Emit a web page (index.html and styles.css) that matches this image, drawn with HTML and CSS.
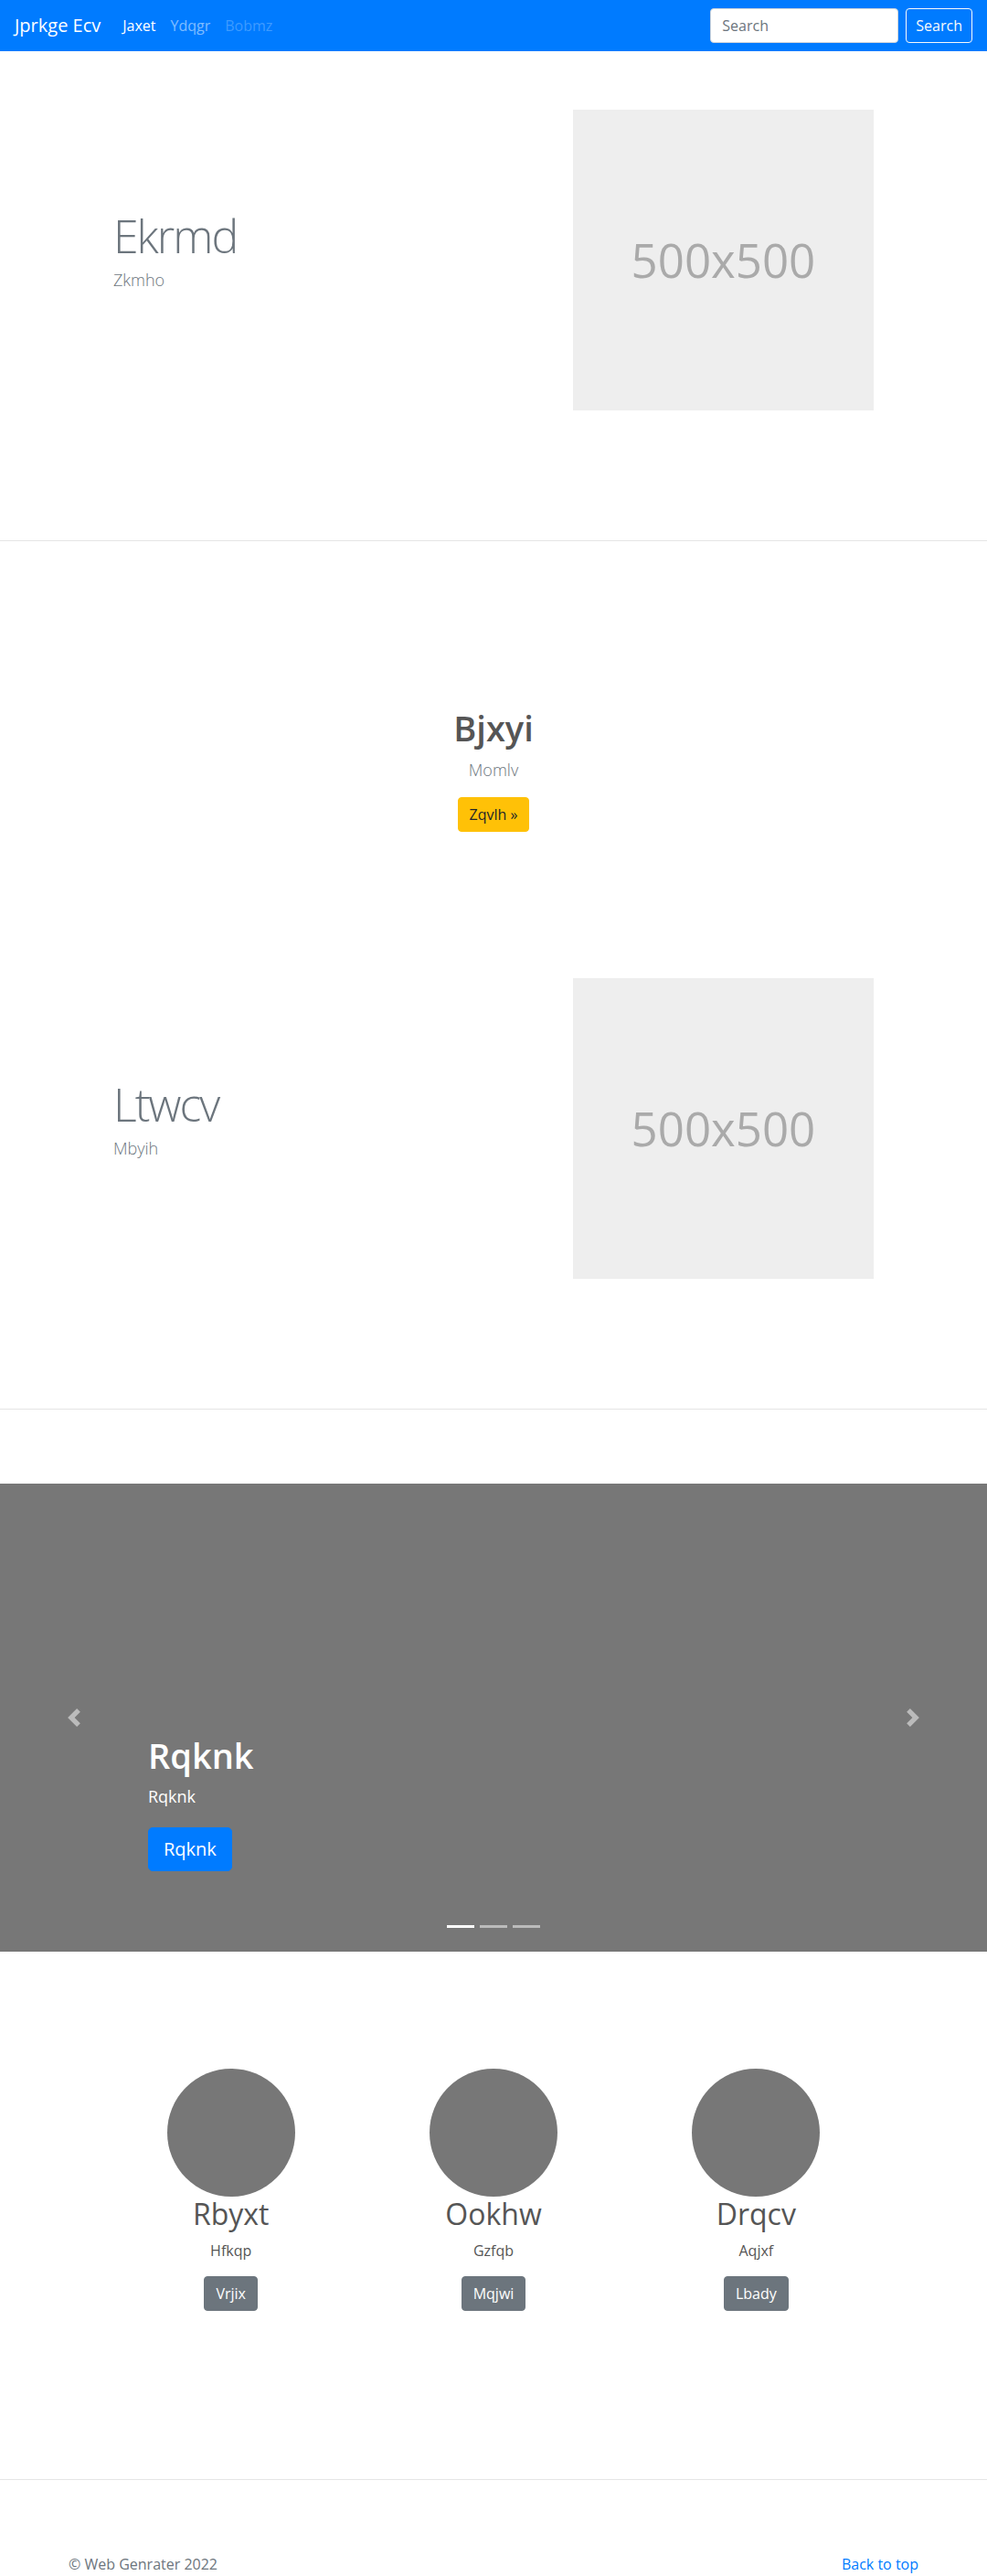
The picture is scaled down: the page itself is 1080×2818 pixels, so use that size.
FILE: index.html
```html
<!DOCTYPE html>
<html lang="en">
<head>
<meta charset="utf-8">
<title>Jprkge Ecv</title>
<link rel="stylesheet" href="styles.css">
</head>
<body>
<nav class="navbar">
  <a class="brand" href="#">Jprkge Ecv</a>
  <ul class="nav">
    <li><a class="nav-link active" href="#">Jaxet</a></li>
    <li><a class="nav-link" href="#">Ydqgr</a></li>
    <li><a class="nav-link disabled" href="#">Bobmz</a></li>
  </ul>
  <form class="search">
    <input class="search-input" type="text" placeholder="Search">
    <button class="search-btn" type="button">Search</button>
  </form>
</nav>

<main>
  <section class="featurette featurette-first">
    <div class="container row">
      <div class="col-7">
        <h2 class="featurette-heading">Ekrmd</h2>
        <p class="lead">Zkmho</p>
      </div>
      <div class="col-5">
        <div class="placeholder">500x500</div>
      </div>
    </div>
  </section>

  <hr class="divider divider-first">

  <section class="hero">
    <h1 class="hero-title">Bjxyi</h1>
    <p class="hero-text">Momlv</p>
    <a class="btn btn-warning" href="#">Zqvlh &raquo;</a>
  </section>

  <section class="featurette featurette-second">
    <div class="container row">
      <div class="col-7">
        <h2 class="featurette-heading">Ltwcv</h2>
        <p class="lead">Mbyih</p>
      </div>
      <div class="col-5">
        <div class="placeholder">500x500</div>
      </div>
    </div>
  </section>

  <hr class="divider divider-second">

  <section class="carousel">
    <ol class="indicators">
      <li class="active"></li>
      <li></li>
      <li></li>
    </ol>
    <a class="control control-prev" href="#">
      <svg width="20" height="20" viewBox="0 0 8 8"><path fill="#fff" d="M5.25 0l-4 4 4 4 1.5-1.5L4.25 4l2.5-2.5L5.25 0z"/></svg>
    </a>
    <a class="control control-next" href="#">
      <svg width="20" height="20" viewBox="0 0 8 8"><path fill="#fff" d="M2.75 0l-1.5 1.5L3.75 4l-2.5 2.5L2.75 8l4-4-4-4z"/></svg>
    </a>
    <div class="caption">
      <h1 class="caption-title">Rqknk</h1>
      <p class="caption-text">Rqknk</p>
      <div class="caption-action"><a class="btn btn-lg btn-primary" href="#">Rqknk</a></div>
    </div>
  </section>

  <section class="marketing container">
    <div class="cols-3">
      <div class="member">
        <div class="avatar"></div>
        <h2 class="member-name">Rbyxt</h2>
        <p class="member-text">Hfkqp</p>
        <a class="btn btn-secondary" href="#">Vrjix</a>
      </div>
      <div class="member">
        <div class="avatar"></div>
        <h2 class="member-name">Ookhw</h2>
        <p class="member-text">Gzfqb</p>
        <a class="btn btn-secondary" href="#">Mqjwi</a>
      </div>
      <div class="member">
        <div class="avatar"></div>
        <h2 class="member-name">Drqcv</h2>
        <p class="member-text">Aqjxf</p>
        <a class="btn btn-secondary" href="#">Lbady</a>
      </div>
    </div>
  </section>

  <hr class="divider divider-third">

  <footer class="footer">
    <p class="copyright">&copy; Web Genrater 2022</p>
    <p class="back"><a href="#">Back to top</a></p>
  </footer>
</main>
</body>
</html>
```

FILE: styles.css
```css
* { box-sizing: border-box; }

body {
  margin: 0;
  font-family: "Open Sans", "Noto Sans", sans-serif;
  font-size: 16px;
  line-height: 1.5;
  color: #212529;
  background: #fff;
}

/* Navbar */
.navbar {
  height: 56px;
  background: #007bff;
  display: flex;
  align-items: center;
  padding: 0 16px;
}
.brand {
  font-size: 20px;
  line-height: 30px;
  color: #fff;
  text-decoration: none;
  margin-right: 16px;
}
.nav {
  display: flex;
  list-style: none;
  margin: 0;
  padding: 0;
  flex: 1;
}
.nav-link {
  display: block;
  padding: 8px;
  font-size: 16px;
  line-height: 24px;
  color: rgba(255, 255, 255, .5);
  text-decoration: none;
}
.nav-link.active { color: #fff; }
.nav-link.disabled { color: rgba(255, 255, 255, .25); }
.search {
  display: flex;
  gap: 8px;
  margin: 0;
}
.search-input {
  width: 206px;
  height: 38px;
  padding: 6px 12px;
  border: 1px solid #ced4da;
  border-radius: 4px;
  font-family: inherit;
  font-size: 16px;
  color: #495057;
  background: #fff;
}
.search-input::placeholder { color: #6c757d; }
.search-btn {
  height: 38px;
  padding: 6px 10px;
  border: 1px solid #f8f9fa;
  border-radius: 4px;
  background: transparent;
  color: #f8f9fa;
  font-family: inherit;
  font-size: 16px;
  line-height: 24px;
}

/* Layout */
.container {
  width: 862px;
  margin: 0 auto;
}
.row {
  display: flex;
  align-items: center;
}
.col-7 {
  flex: 0 0 58.3333%;
  padding: 0 15px;
}
.col-5 {
  flex: 0 0 41.6667%;
  padding: 0 15px;
}

/* Featurettes */
.featurette-first { padding-top: 64px; }
.featurette-second { padding-top: 160px; }
.featurette-heading {
  margin: 0 0 10px;
  font-size: 50px;
  font-weight: 300;
  line-height: 1;
  letter-spacing: -2px;
  color: #6c757d;
}
.lead {
  margin: 0 0 17px;
  font-size: 18px;
  font-weight: 300;
  line-height: 27px;
  color: #6c757d;
}
.placeholder {
  width: 100%;
  aspect-ratio: 1 / 1;
  background: #eee;
  color: #aaa;
  display: flex;
  align-items: center;
  justify-content: center;
  font-size: 51px;
}

.divider {
  height: 0;
  border: 0;
  border-top: 1px solid #e5e5e5;
  margin: 0;
}
.divider-first, .divider-second { margin-top: 142px; }
.divider-third { margin-top: 160px; }

/* Hero */
.hero {
  display: flex;
  flex-direction: column;
  align-items: center;
  padding-top: 180px;
}
.hero-title {
  margin: 0 0 9px;
  font-size: 38px;
  font-weight: 600;
  line-height: 48px;
  color: #555;
}
.hero-text {
  margin: 0 0 16px;
  font-size: 18px;
  font-weight: 300;
  line-height: 27px;
  color: #6c757d;
}

/* Buttons */
.btn {
  display: inline-block;
  padding: 6px 12px;
  font-size: 16px;
  line-height: 24px;
  border: 1px solid transparent;
  border-radius: 4px;
  text-decoration: none;
}
.btn-lg {
  padding: 8px 16px;
  font-size: 20px;
  line-height: 30px;
  border-radius: 5px;
}
.btn-warning { background: #ffc107; border-color: #ffc107; color: #212529; }
.btn-primary { background: #007bff; border-color: #007bff; color: #fff; }
.btn-secondary { background: #6c757d; border-color: #6c757d; color: #fff; }

/* Carousel */
.carousel {
  position: relative;
  height: 512px;
  margin: 81px 0 128px;
  background: #777;
}
.indicators {
  position: absolute;
  left: 0;
  right: 0;
  bottom: 26px;
  display: flex;
  justify-content: center;
  gap: 6px;
  margin: 0;
  padding: 0;
  list-style: none;
}
.indicators li {
  width: 30px;
  height: 3px;
  background: #fff;
  opacity: .5;
}
.indicators li.active { opacity: 1; }
.control {
  position: absolute;
  top: 0;
  bottom: 0;
  width: 15%;
  display: flex;
  align-items: center;
  justify-content: center;
  opacity: .5;
}
.control-prev { left: 0; }
.control-next { right: 0; }
.caption {
  position: absolute;
  left: 15%;
  right: 15%;
  bottom: 48px;
  padding: 20px 0;
  color: #fff;
  text-align: left;
}
.caption-title {
  margin: 0 0 8px;
  font-size: 38px;
  font-weight: 600;
  line-height: 48px;
}
.caption-text {
  margin: 0 0 20px;
  font-size: 18px;
  line-height: 27px;
}
.caption-action { display: flex; margin-bottom: 20px; }

/* Marketing */
.cols-3 {
  display: flex;
}
.member {
  flex: 1 1 0;
  padding: 0 15px;
  margin-bottom: 24px;
  display: flex;
  flex-direction: column;
  align-items: center;
  text-align: center;
}
.avatar {
  width: 140px;
  height: 140px;
  border-radius: 50%;
  background: #777;
}
.member-name {
  margin: 0 0 8px;
  font-size: 32px;
  font-weight: 400;
  line-height: 38.4px;
  color: #555;
}
.member-text {
  margin: 0 0 16px;
  color: #555;
}

/* Footer */
.footer {
  width: 960px;
  margin: 0 auto;
  padding: 80px 15px 0;
  display: flex;
  justify-content: space-between;
}
.footer p { margin: 0 0 16px; }
.copyright { color: #6c757d; }
.back a { color: #007bff; text-decoration: none; }
```
